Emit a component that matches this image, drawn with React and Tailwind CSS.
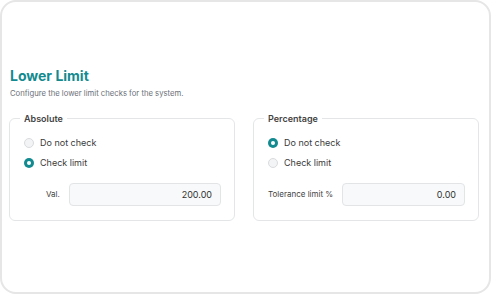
import React, { useState } from "react";

function Radio({ checked, label, onClick }) {
  return (
    <label className="flex items-center gap-[6px] cursor-pointer" onClick={onClick}>
      {checked ? (
        <span className="w-[10px] h-[10px] rounded-full bg-[#138a8f] flex items-center justify-center">
          <span className="w-[4px] h-[4px] rounded-full bg-white" />
        </span>
      ) : (
        <span className="w-[10px] h-[10px] rounded-full border border-[#d9dbdd] bg-[#f3f4f5]" />
      )}
      <span className="text-[9px] leading-[12px] text-[#3a3a3a]">{label}</span>
    </label>
  );
}

function LimitBox({ title, mode, setMode, label, labelClass, value }) {
  return (
    <fieldset className="min-w-0 border border-[#e3e5e7] rounded-[6px] pl-[14px] pr-[13px] pb-[14px] pt-[13px]">
      <legend className="ml-[-4px] px-[4px] text-[9px] leading-[11px] font-semibold text-[#444]">{title}</legend>
      <div className="flex flex-col gap-[8px]">
        <Radio checked={mode === "none"} label="Do not check" onClick={() => setMode("none")} />
        <Radio checked={mode === "check"} label="Check limit" onClick={() => setMode("check")} />
      </div>
      <div className="flex items-center mt-[14px]">
        <span className={labelClass}>{label}</span>
        <input
          className="flex-1 min-w-0 h-[23px] rounded-[4px] border border-[#e2e4e6] bg-[#f7f9fa] px-[8px] text-right text-[9px] text-[#333] outline-none"
          defaultValue={value}
        />
      </div>
    </fieldset>
  );
}

export default function App() {
  const [absMode, setAbsMode] = useState("check");
  const [pctMode, setPctMode] = useState("none");

  return (
    <div className="w-[491px] h-[294px] bg-white" style={{ fontFamily: "Inter, 'Noto Sans', sans-serif" }}>
      <div className="w-full h-full border-2 border-[#e6e6e6] rounded-[16px] pt-[64px] pl-[7px] pr-[10px]">
        {/* Header */}
        <h1 className="text-[14px] font-bold text-[#138a8f] leading-[20px] pl-[1px]">Lower Limit</h1>
        <p className="text-[7.7px] text-[#6b7078] mt-[2px] pl-[1px]">Configure the lower limit checks for the system.</p>

        {/* Limit boxes */}
        <div className="grid grid-cols-2 gap-[18px] mt-[13px]">
          <LimitBox
            title="Absolute"
            mode={absMode}
            setMode={setAbsMode}
            label="Val."
            labelClass="w-[45px] shrink-0 pl-[22px] text-[8px] text-[#444]"
            value="200.00"
          />
          <LimitBox
            title="Percentage"
            mode={pctMode}
            setMode={setPctMode}
            label="Tolerance limit %"
            labelClass="w-[74px] shrink-0 text-[8px] text-[#444]"
            value="0.00"
          />
        </div>
      </div>
    </div>
  );
}
